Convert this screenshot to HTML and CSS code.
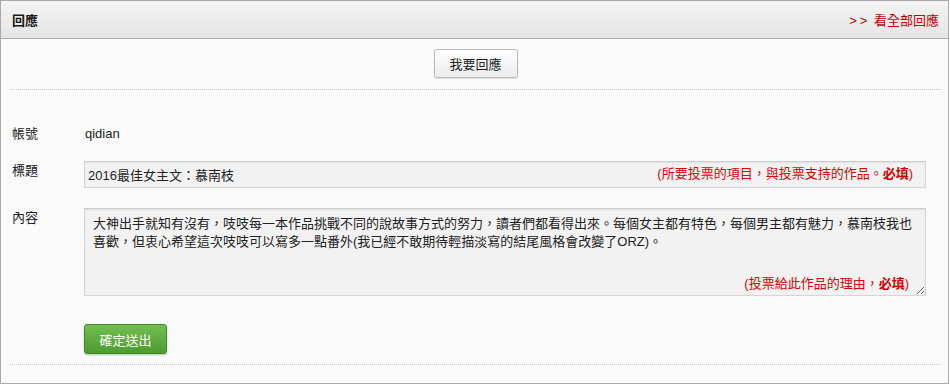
FILE: index.html
```html
<!DOCTYPE html>
<html>
<head>
    <title>回應</title>
    <meta charset="utf-8">
    <link rel="stylesheet" href="styles.css">
</head>
<body>
    <div class="panel">
        <div class="panel-head">
            <span class="panel-title">回應</span>
            <a class="more-link" href="#"><span class="arrows">&gt;&gt;</span> 看全部回應</a>
        </div>
        <div class="panel-body">
            <div class="action">
                <button class="btn">我要回應</button>
            </div>
            <form class="reply-form">
                <div class="form-row row-account">
                    <label>帳號</label>
                    <div class="field-text">qidian</div>
                </div>
                <div class="form-row">
                    <label for="title">標題</label>
                    <div class="field">
                        <input id="title" class="text-input" type="text" value="2016最佳女主文：慕南枝" readonly>
                        <span class="hint hint-input">(所要投票的項目，與投票支持的作品。<b>必填</b>)</span>
                    </div>
                </div>
                <div class="form-row">
                    <label for="content">內容</label>
                    <div class="field">
                        <textarea id="content" class="text-area" readonly>大神出手就知有沒有，吱吱每一本作品挑戰不同的說故事方式的努力，讀者們都看得出來。每個女主都有特色，每個男主都有魅力，慕南枝我也喜歡，但衷心希望這次吱吱可以寫多一點番外(我已經不敢期待輕描淡寫的結尾風格會改變了ORZ)。</textarea>
                        <span class="hint hint-area">(投票給此作品的理由，<b>必填</b>)</span>
                    </div>
                </div>
                <div class="form-row row-submit">
                    <span></span>
                    <div>
                        <button class="btn btn-green" type="button">確定送出</button>
                    </div>
                </div>
            </form>
        </div>
    </div>
</body>
</html>
```

FILE: styles.css
```css
body {
    margin: 0;
    padding: 0;
    background: #fff;
    font-family: "Liberation Sans", "Noto Sans CJK TC", sans-serif;
    font-size: 13px;
    color: #222;
}

.panel {
    width: 949px;
    height: 384px;
    box-sizing: border-box;
    border: 1px solid #a9a9a9;
    background: #fafafa;
    display: flex;
    flex-direction: column;
}

.panel-head {
    height: 36px;
    border-bottom: 1px solid #a9a9a9;
    background: linear-gradient(#f3f3f3, #e5e5e5);
    display: flex;
    align-items: center;
    justify-content: space-between;
    padding: 0 9px 1px 11px;
}

.panel-title {
    font-weight: bold;
    color: #1a1a1a;
}

.more-link {
    color: #c00000;
    text-decoration: none;
}

.more-link .arrows {
    letter-spacing: 3px;
}

.panel-body {
    flex: 1;
    padding: 0 7px 0 9px;
}

.action {
    display: flex;
    justify-content: center;
    padding: 10px 0 11px;
    border-bottom: 1px dotted #c8c8c8;
}

.btn {
    font-family: inherit;
    font-size: 13px;
    height: 29px;
    width: 84px;
    padding: 0;
    color: #222;
    border: 1px solid #b8b8b8;
    border-radius: 3px;
    background: linear-gradient(#ffffff, #ececec);
    box-shadow: 0 1px 1px rgba(0, 0, 0, 0.12);
    cursor: pointer;
}

.btn-green {
    width: 83px;
    height: 30px;
    color: #fff;
    border-color: #3f8a2a;
    background: linear-gradient(#74bd51, #4c9c32);
    box-shadow: 0 1px 2px rgba(0, 0, 0, 0.25);
}

.reply-form {
    padding: 35px 0 10px 2px;
    border-bottom: 1px dotted #c8c8c8;
}

.form-row {
    display: grid;
    grid-template-columns: 72px 842px;
    align-items: start;
    line-height: 18px;
    margin-bottom: 20px;
}

.form-row label {
    padding-top: 1px;
    color: #222;
}

.row-account {
    margin-bottom: 18px;
}

.row-account label {
    padding-top: 0;
}

.row-submit {
    margin-top: 28px;
    margin-bottom: 0;
}

.field-text {
    padding-left: 1px;
}

.field {
    position: relative;
}

.text-input,
.text-area {
    display: block;
    width: 100%;
    box-sizing: border-box;
    font-family: inherit;
    font-size: 13px;
    color: #222;
    background: #f2f2f2;
    border: 1px solid #d6d6d6;
    border-top-color: #cdcdcd;
    box-shadow: inset 0 1px 2px rgba(0, 0, 0, 0.08);
    outline: none;
    margin: 0;
}

.text-input {
    height: 27px;
    padding: 0 3px;
}

.text-area {
    height: 88px;
    padding: 6px 8px;
    line-height: 18px;
    resize: vertical;
}

.hint {
    position: absolute;
    color: #e00000;
    line-height: 18px;
}

.hint b {
    color: #d00000;
}

.hint-input {
    right: 13px;
    top: 4px;
}

.hint-area {
    right: 17px;
    bottom: 3px;
}
```
